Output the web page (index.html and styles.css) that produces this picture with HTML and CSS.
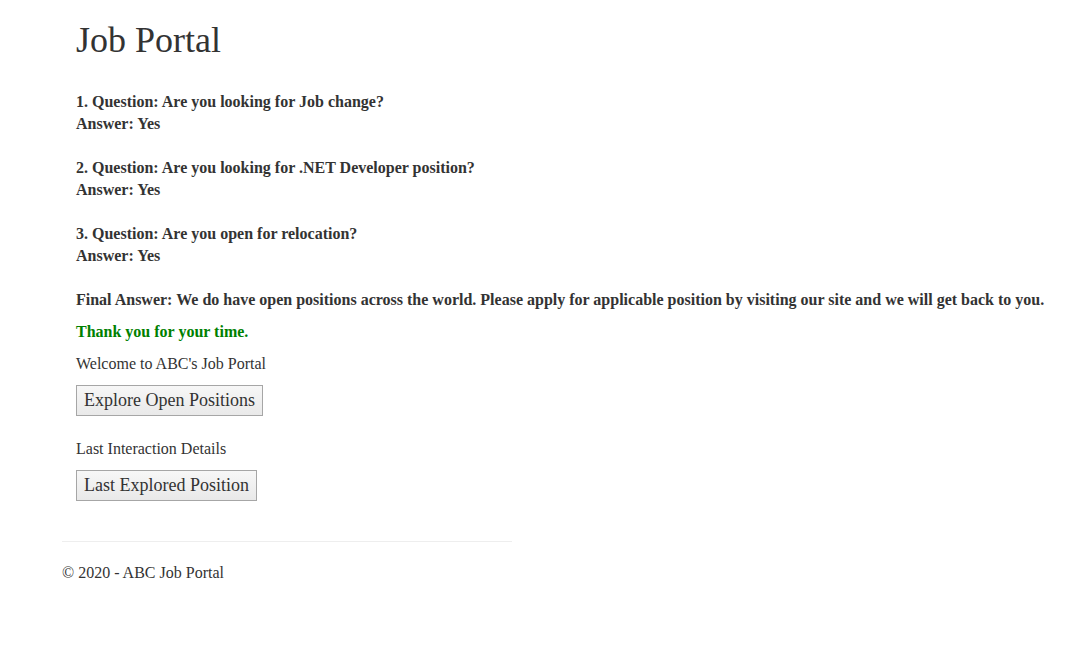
FILE: index.html
```html
<!DOCTYPE html>
<html>
<head>
<meta charset="utf-8">
<link rel="stylesheet" href="styles.css">
</head>
<body>
<div class="page">
  <main class="content">
    <h2 class="title">Job Portal</h2>
    <p class="qa"><b>1. Question: Are you looking for Job change?</b><br><b>Answer: Yes</b></p>
    <p class="qa"><b>2. Question: Are you looking for .NET Developer position?</b><br><b>Answer: Yes</b></p>
    <p class="qa"><b>3. Question: Are you open for relocation?</b><br><b>Answer: Yes</b></p>
    <p class="final"><b>Final Answer: We do have open positions across the world. Please apply for applicable position by visiting our site and we will get back to you.</b></p>
    <p class="thanks">Thank you for your time.</p>
    <p class="label">Welcome to ABC's Job Portal</p>
    <button class="btn" type="button">Explore Open Positions</button>
    <p class="label label-gap">Last Interaction Details</p>
    <button class="btn" type="button">Last Explored Position</button>
  </main>
  <hr class="rule">
  <footer class="footer">© 2020 - ABC Job Portal</footer>
</div>
</body>
</html>
```
FILE: styles.css
```css
html, body {
  margin: 0;
  padding: 0;
  background: #fff;
}
body {
  font-family: "Liberation Serif", "Times New Roman", serif;
  font-size: 16px;
  line-height: 22px;
  color: #333;
}
.page {
  padding-left: 62px;
}
.content {
  padding-left: 14px;
}
.title {
  font-size: 36px;
  font-weight: normal;
  line-height: 40px;
  margin: 20px 0 0;
  padding-bottom: 31px;
}
.qa {
  margin: 0 0 22px;
}
.final {
  margin: 0 0 10px;
}
.thanks {
  margin: 0 0 10px;
  color: #008000;
  font-weight: bold;
}
.label {
  margin: 0 0 10px;
}
.label-gap {
  margin-top: 22px;
}
.btn {
  display: block;
  font-family: "Liberation Serif", "Times New Roman", serif;
  font-size: 18px;
  line-height: 21px;
  color: #333;
  padding: 4px 7px;
  margin: 0;
  background: linear-gradient(#f7f7f7, #e9e9e9);
  border: 1px solid #a6a6a6;
  border-radius: 0;
}
.rule {
  width: 450px;
  margin: 40px 0 20px;
  border: 0;
  border-top: 1px solid #eee;
}
.footer {
  margin: 0;
}
```
